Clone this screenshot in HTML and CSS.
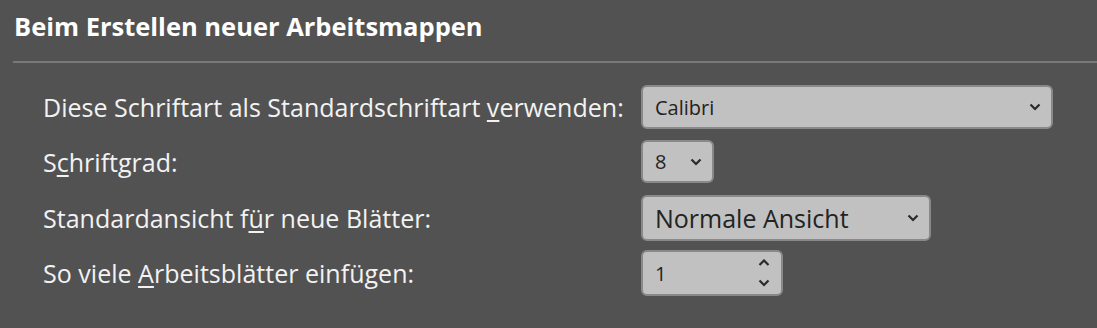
FILE: index.html
```html
<html>
<head>
<title>Optionen</title>
<link rel="stylesheet" href="styles.css">
</head>
<body>

<div class="head">Beim Erstellen neuer Arbeitsmappen</div>
<div class="rule"></div>

<div class="opts">
	<div class="row r1">
		<div class="lbl">Diese Schriftart als Standardschriftart <u>v</u>erwenden:</div>
		<div class="box font">
			<span class="val">Calibri</span>
			<svg class="chev" width="12" height="8" viewBox="0 0 12 8"><polyline points="1.5,1.5 6,6 10.5,1.5" /></svg>
		</div>
	</div>
	<div class="row r2">
		<div class="lbl">S<u>c</u>hriftgrad:</div>
		<div class="box size">
			<span class="val">8</span>
			<svg class="chev" width="12" height="8" viewBox="0 0 12 8"><polyline points="1.5,1.5 6,6 10.5,1.5" /></svg>
		</div>
	</div>
	<div class="row r3">
		<div class="lbl">Standardansicht f<u>ü</u>r neue Blätter:</div>
		<div class="box view">
			<span class="val big">Normale Ansicht</span>
			<svg class="chev" width="12" height="8" viewBox="0 0 12 8"><polyline points="1.5,1.5 6,6 10.5,1.5" /></svg>
		</div>
	</div>
	<div class="row r4">
		<div class="lbl">So viele <u>A</u>rbeitsblätter einfügen:</div>
		<div class="box spin">
			<span class="val">1</span>
			<div class="arrows">
				<svg width="12" height="8" viewBox="0 0 12 8"><polyline points="1.5,6 6,1.5 10.5,6" /></svg>
				<svg width="12" height="8" viewBox="0 0 12 8"><polyline points="1.5,1.5 6,6 10.5,1.5" /></svg>
			</div>
		</div>
	</div>
</div>

</body>
</html>
```

FILE: styles.css
```css
body {margin: 0; background: #525252; font-family: "Open Sans", "Noto Sans", sans-serif; color: #f2f2f2;}
.head {height: 52px; padding-left: 14px; display: flex; align-items: center; font-size: 25.5px; font-weight: bold; color: #fff;}
.rule {height: 2px; margin: 9px 0 0 13px; background: #787878;}
.opts {padding: 22px 0 0 43px;}
.row {display: flex; align-items: center;}
.r2 {margin-top: 11px;}
.r3 {margin-top: 12px;}
.r4 {margin-top: 9px;}
.lbl {width: 598px; font-size: 25px; letter-spacing: 0.02px;}
.lbl u {text-underline-offset: 3px; text-decoration-thickness: 1.5px;}
.box {box-sizing: border-box; height: 44px; border: 2px solid #898989; border-radius: 6px; background: #c1c1c1; color: #232323; display: flex; align-items: center; padding: 0 10px 0 12px;}
.val {flex: 1; font-size: 20px;}
.val.big {font-size: 25px;}
.font {width: 412px;}
.size {width: 73px; height: 43px;}
.view {width: 290px; height: 46px;}
.spin {width: 142px; height: 46px; padding-right: 11px;}
.chev polyline, .arrows polyline {fill: none; stroke: #2a2a2a; stroke-width: 2.2;}
.arrows {display: flex; flex-direction: column; gap: 12px;}
```
